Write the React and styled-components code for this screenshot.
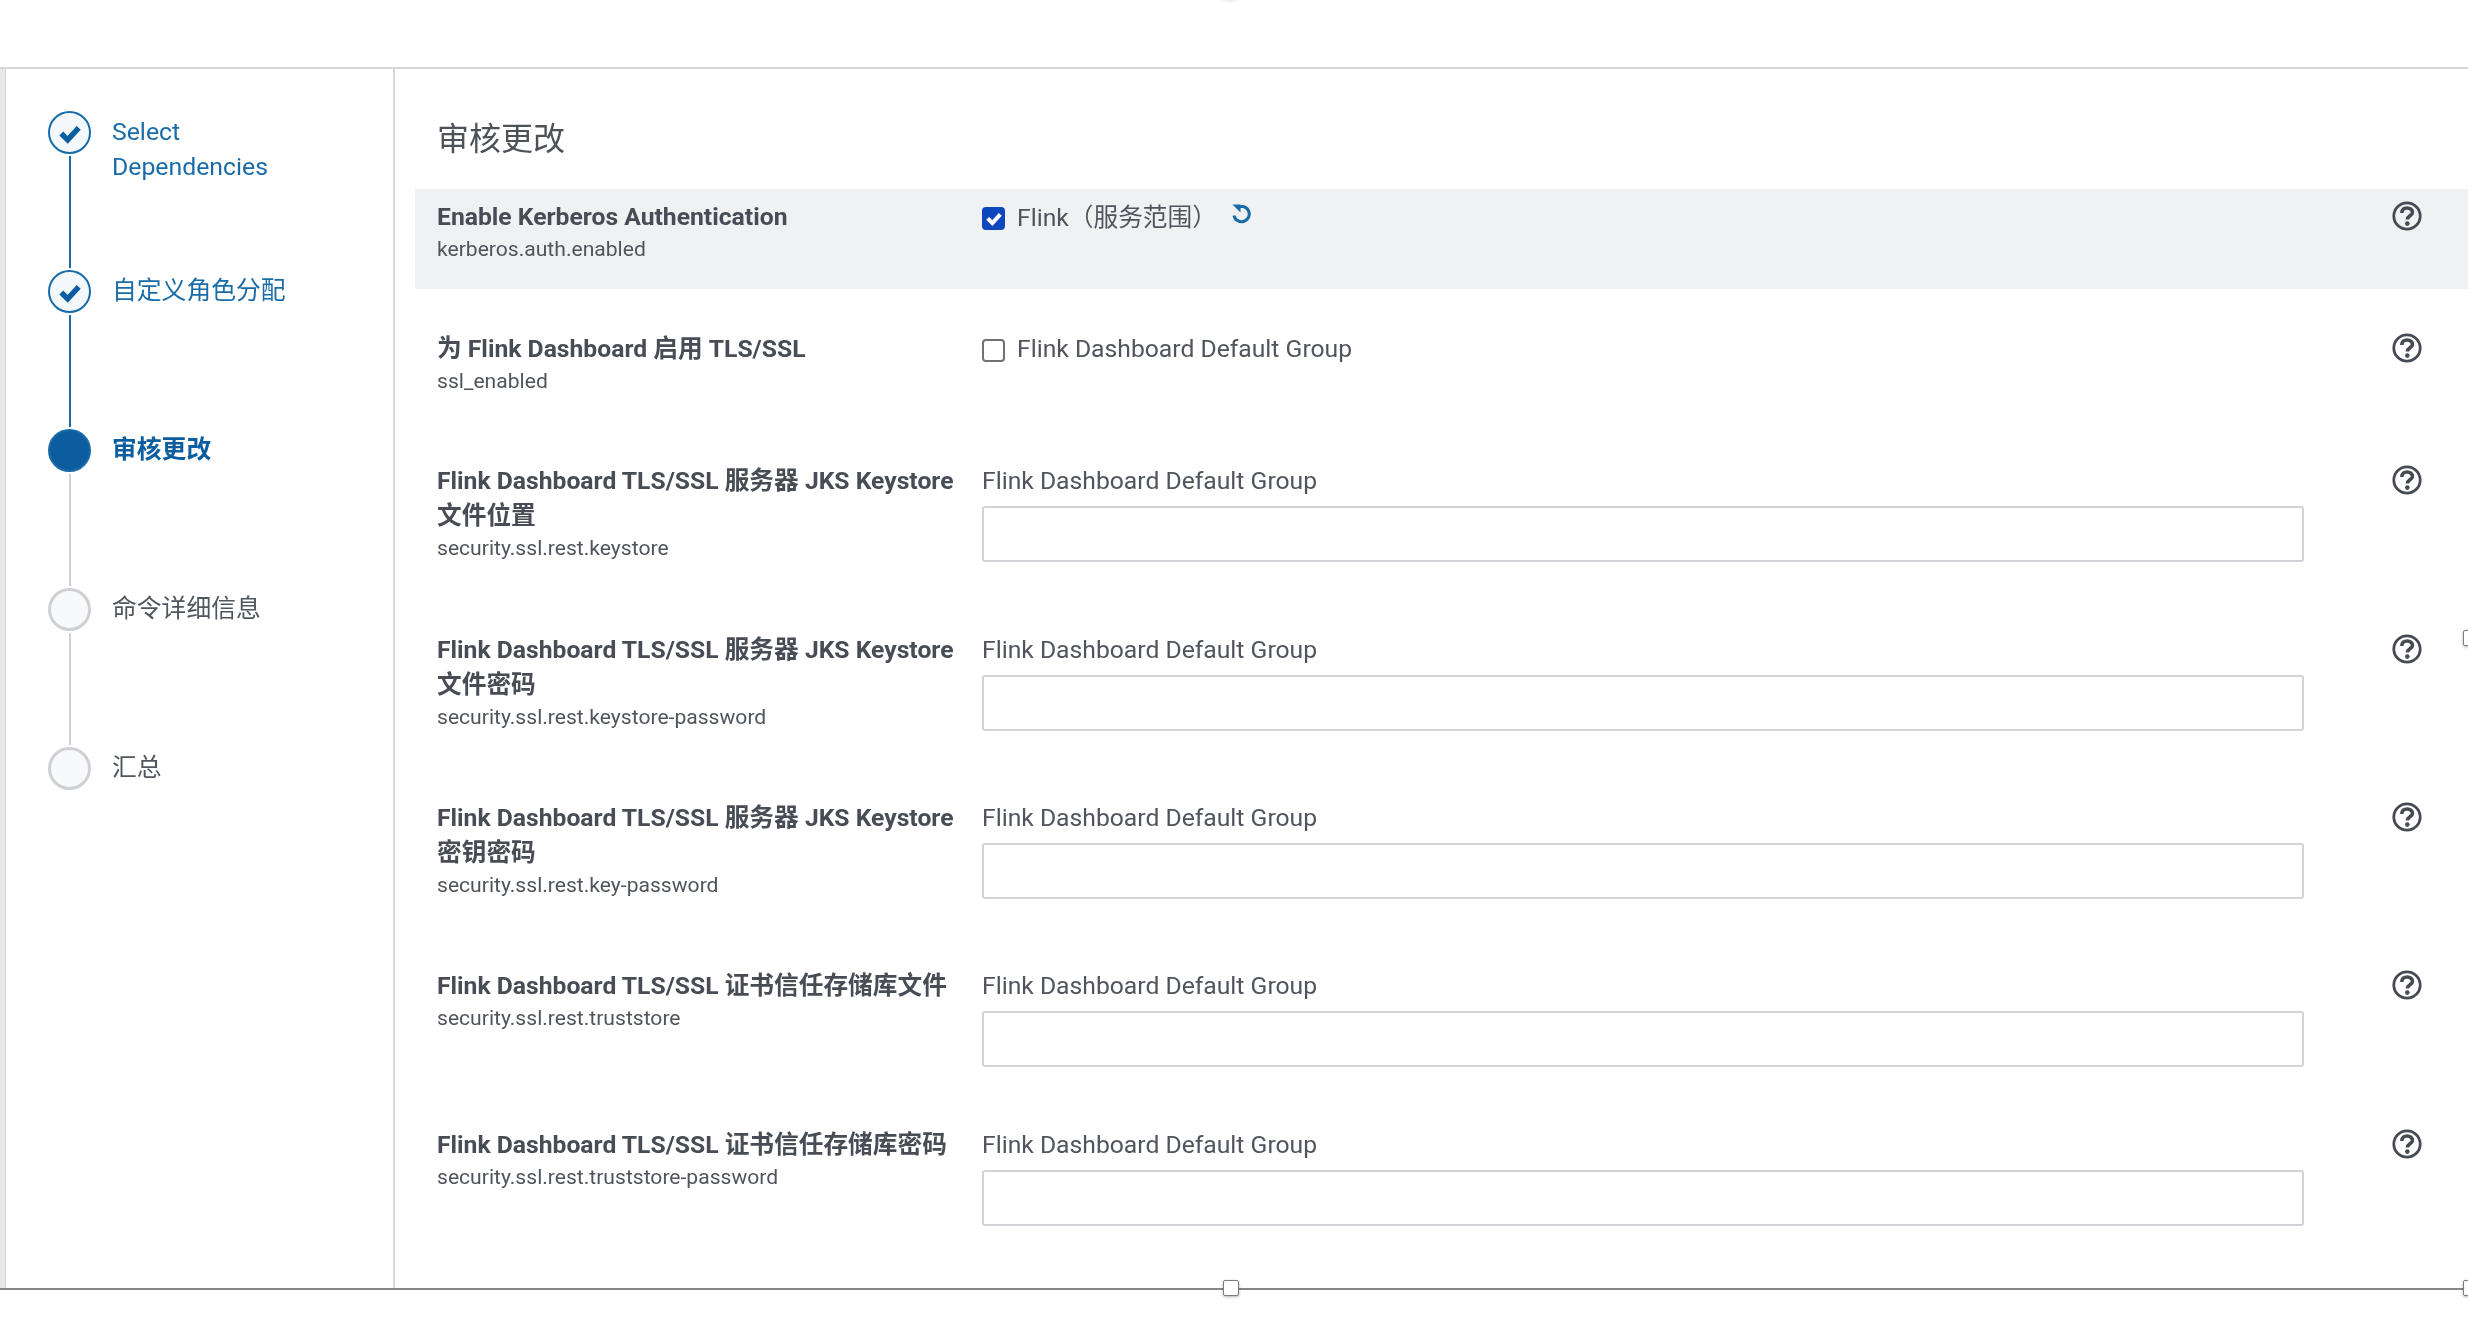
import React from "react";
import styled, { createGlobalStyle } from "styled-components";

const Global = createGlobalStyle`
  html, body { margin: 0; padding: 0; background: #fff; }
  body { font-family: Roboto, "Noto Sans CJK SC", sans-serif; color: #4a4f57; }
  * { box-sizing: border-box; }
`;

const Page = styled.div`
  position: relative;
  width: 2468px;
  height: 1344px;
  overflow: hidden;
  display: flex;
  flex-direction: column;
  background: #fff;
`;
const TopBlob = styled.div`
  position: absolute;
  left: 1220px;
  top: -8px;
  width: 20px;
  height: 10px;
  border-radius: 50%;
  background: #ececec;
  filter: blur(1px);
`;
const TopSpace = styled.div`
  height: 67px;
  flex: none;
`;
const Frame = styled.div`
  flex: none;
  height: 1223px;
  display: flex;
  border-top: 2px solid #d3d6d9;
  border-bottom: 2px solid #868686;
  filter: blur(0.45px);
`;
const LeftStrip = styled.div`
  flex: none;
  width: 5px;
  background: #e8e9ed;
`;
const Sidebar = styled.nav`
  flex: none;
  width: 390px;
  padding-top: 42px;
  border-left: 1px solid #d3d5d8;
  border-right: 2px solid #d5d6d9;
`;
const Step = styled.div`
  position: relative;
  display: flex;
  height: 159px;
  padding-left: 42px;
  gap: 21px;
`;
const Dot = styled.div`
  flex: none;
  width: 43px;
  height: 43px;
  border-radius: 50%;
  display: flex;
  align-items: center;
  justify-content: center;
  border: 2px solid ${p => (p.$state === "todo" ? "#cfd0d3" : "#1a6ca8")};
  ${p => p.$state === "todo" && "border-width: 3px;"}
  background: ${p =>
    p.$state === "current" ? "#0b5d9f" : p.$state === "done" ? "#f2f8fc" : "#f8f9fb"};
`;
const Connector = styled.div`
  position: absolute;
  left: 63px;
  top: 45px;
  width: 2px;
  height: 112px;
  background: ${p => (p.$done ? "#1a6ca8" : "#d0d1d4")};
`;
const StepLabel = styled.div`
  font-size: 24.8px;
  line-height: 35px;
  width: 190px;
  padding-top: 3px;
  color: ${p => (p.$state === "todo" ? "#50565e" : "#1a6ca8")};
  font-weight: ${p => (p.$state === "current" ? 700 : 400)};
  ${p => p.$state === "current" && "color: #0b5d9f;"}
`;
const Content = styled.main`
  flex: 1;
  min-width: 0;
  padding: 0 0 0 20px;
`;
const Title = styled.h2`
  margin: 0;
  height: 120px;
  padding: 51px 0 0 22px;
  font-size: 32px;
  line-height: 38px;
  font-weight: 400;
  color: #4d5259;
`;
const Row = styled.section`
  display: grid;
  grid-template-columns: 545px 1322px 1fr;
  align-items: start;
  height: ${p => p.$h}px;
  padding: 10px 0 0 22px;
  background: ${p => (p.$hl ? "#f0f1f3" : "transparent")};
  margin-bottom: ${p => p.$mb}px;
`;
const LabelCol = styled.div`
  padding-right: 20px;
`;
const Name = styled.div`
  font-size: 24.7px;
  line-height: 35px;
  font-weight: 700;
  color: #484d55;
`;
const Key = styled.div`
  font-size: 21.1px;
  line-height: 32px;
  margin-top: -1px;
  color: #50555d;
`;
const ControlCol = styled.div`
  display: flex;
  flex-direction: column;
`;
const CheckLine = styled.label`
  display: flex;
  align-items: center;
  height: 35px;
  font-size: 24.7px;
  color: #50555d;
`;
const Check = styled.span`
  flex: none;
  width: 23px;
  height: 23px;
  margin: 3px 12px 0 0;
  border-radius: 4px;
  display: flex;
  align-items: center;
  justify-content: center;
  background: ${p => (p.$on ? "#0d47bd" : "#fff")};
  border: 2px solid ${p => (p.$on ? "#0d47bd" : "#6f7276")};
`;
const CheckText = styled.span`
  margin-top: ${p => (p.$cjk ? "-4px" : "0")};
`;
const Reset = styled.span`
  display: flex;
  margin: -7px 0 0 14px;
  color: #1a6ca8;
`;
const GroupName = styled.div`
  font-size: 24.7px;
  line-height: 35px;
  height: 43px;
  color: #50555d;
`;
const TextInput = styled.input`
  display: block;
  width: 100%;
  height: 56px;
  padding: 0 12px;
  border: 2px solid #d2d3d7;
  border-radius: 3px;
  background: #fff;
  outline: none;
`;
const HelpCol = styled.div`
  display: flex;
  padding: 2px 0 0 88px;
  color: #464b53;
`;
const Handle = styled.div`
  position: absolute;
  width: 16px;
  height: 16px;
  background: #fff;
  border: 1.5px solid #7d7d7d;
  border-radius: 2px;
  box-shadow: 0 1px 3px rgba(0, 0, 0, 0.3);
`;
const HandleBottom = styled(Handle)`
  left: 1223px;
  top: 1280px;
`;
const HandleRight = styled(Handle)`
  left: 2463px;
  top: 1280px;
`;
const HandleSide = styled(Handle)`
  left: 2463px;
  top: 630px;
`;

const CheckMark = ({ size = 22, color = "#0b5d9f" }) => (
  <svg width={size} height={size} viewBox="0 0 24 24" aria-hidden="true">
    <path d="M2.5 12.5 L9.5 19.5 L21.5 6.5" fill="none" stroke={color} strokeWidth="6" />
  </svg>
);

const Help = () => (
  <svg width="30" height="30" viewBox="0 0 30 30" aria-hidden="true">
    <circle cx="15" cy="15" r="13.2" fill="none" stroke="currentColor" strokeWidth="2.8" />
    <path
      d="M9.8 12 C9.8 8.6 12.2 7 15 7 C18.2 7 20.4 8.8 20.4 11.4 C20.4 14.9 15.4 14.6 15.4 18.4"
      fill="none"
      stroke="currentColor"
      strokeWidth="3.6"
    />
    <circle cx="15.3" cy="22.6" r="2.3" fill="currentColor" />
  </svg>
);

const ResetIcon = () => (
  <svg width="21" height="21" viewBox="0 0 22 22" aria-hidden="true">
    <path
      d="M6 5.4 A8 8 0 1 1 3.2 13"
      fill="none"
      stroke="currentColor"
      strokeWidth="3.2"
    />
    <path d="M1.5 1.5 L10 1.5 L10 10 Z" fill="currentColor" />
  </svg>
);

const steps = [
  { label: "Select Dependencies", state: "done", line: true },
  { label: "自定义角色分配", state: "done", line: true },
  { label: "审核更改", state: "current", line: false },
  { label: "命令详细信息", state: "todo", line: false },
  { label: "汇总", state: "todo", line: null },
];

const G = "Flink Dashboard Default Group";
const rows = [
  { name: "Flink Dashboard TLS/SSL 服务器 JKS Keystore 文件位置", key: "security.ssl.rest.keystore", h: 169 },
  { name: "Flink Dashboard TLS/SSL 服务器 JKS Keystore 文件密码", key: "security.ssl.rest.keystore-password", h: 168 },
  { name: "Flink Dashboard TLS/SSL 服务器 JKS Keystore 密钥密码", key: "security.ssl.rest.key-password", h: 168 },
  { name: "Flink Dashboard TLS/SSL 证书信任存储库文件", key: "security.ssl.rest.truststore", h: 159 },
  { name: "Flink Dashboard TLS/SSL 证书信任存储库密码", key: "security.ssl.rest.truststore-password", h: 159 },
];

export default function App() {
  return (
    <Page>
      <Global />
      <TopBlob />
      <TopSpace />
      <Frame>
        <LeftStrip />
        <Sidebar>
          {steps.map(s => (
            <Step key={s.label}>
              <Dot $state={s.state}>{s.state === "done" && <CheckMark />}</Dot>
              {s.line !== null && <Connector $done={s.line} />}
              <StepLabel $state={s.state}>{s.label}</StepLabel>
            </Step>
          ))}
        </Sidebar>
        <Content>
          <Title>审核更改</Title>
          <Row $hl $h={100} $mb={32}>
            <LabelCol>
              <Name>Enable Kerberos Authentication</Name>
              <Key>kerberos.auth.enabled</Key>
            </LabelCol>
            <ControlCol>
              <CheckLine>
                <Check $on>
                  <CheckMark size={16} color="#fff" />
                </Check>
                <CheckText $cjk>Flink（服务范围）</CheckText>
                <Reset>
                  <ResetIcon />
                </Reset>
              </CheckLine>
            </ControlCol>
            <HelpCol>
              <Help />
            </HelpCol>
          </Row>
          <Row $h={100} $mb={32}>
            <LabelCol>
              <Name>为 Flink Dashboard 启用 TLS/SSL</Name>
              <Key>ssl_enabled</Key>
            </LabelCol>
            <ControlCol>
              <CheckLine>
                <Check />
                <CheckText>{G}</CheckText>
              </CheckLine>
            </ControlCol>
            <HelpCol>
              <Help />
            </HelpCol>
          </Row>
          {rows.map(r => (
            <Row key={r.key} $h={r.h} $mb={0}>
              <LabelCol>
                <Name>{r.name}</Name>
                <Key>{r.key}</Key>
              </LabelCol>
              <ControlCol>
                <GroupName>{G}</GroupName>
                <TextInput type="text" />
              </ControlCol>
              <HelpCol>
                <Help />
              </HelpCol>
            </Row>
          ))}
        </Content>
      </Frame>
      <HandleBottom />
      <HandleRight />
      <HandleSide />
    </Page>
  );
}
